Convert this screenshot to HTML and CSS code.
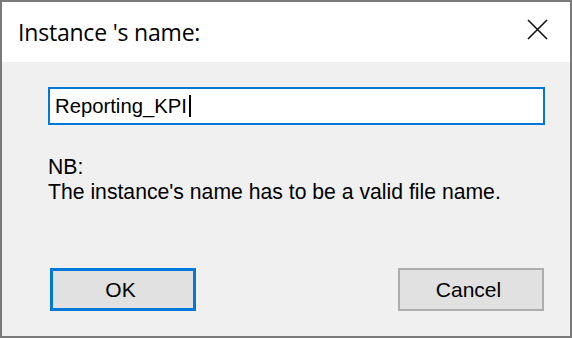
FILE: index.html
```html
<!DOCTYPE html>
<html>
<head>
<meta charset="utf-8">
<link rel="stylesheet" href="styles.css">
</head>
<body>
<div class="dialog">
  <div class="titlebar">
    <span class="title">Instance 's name:</span>
    <svg class="close" width="21" height="21" viewBox="0 0 21 21"><path d="M1 1 L20 20 M20 1 L1 20" stroke="#111" stroke-width="1.6" fill="none"/></svg>
  </div>
  <div class="content">
    <div class="input"><span class="value">Reporting_KPI</span><span class="caret"></span></div>
    <div class="note">
      <div>NB:</div>
      <div>The instance's name has to be a valid file name.</div>
    </div>
    <div class="buttons">
      <div class="btn ok">OK</div>
      <div class="btn cancel">Cancel</div>
    </div>
  </div>
</div>
</body>
</html>
```

FILE: styles.css
```css
html, body {
  margin: 0;
  padding: 0;
  background: #ffffff;
}
.dialog {
  width: 572px;
  height: 338px;
  box-sizing: border-box;
  border: 2px solid #7a7a7a;
  display: flex;
  flex-direction: column;
  background: #f0f0f0;
}
.titlebar {
  height: 60px;
  background: #ffffff;
  display: flex;
  align-items: center;
  justify-content: space-between;
  padding: 0 22px 0 16px;
  flex-shrink: 0;
}
.title {
  font-family: "Open Sans", "Noto Sans", sans-serif;
  font-size: 23px;
  color: #000;
  letter-spacing: -0.2px;
}
.close {
  display: block;
  margin-top: -6px;
}
.content {
  flex: 1;
  padding: 25px 0 0 46px;
  font-family: "Liberation Sans", Arial, sans-serif;
  font-size: 21.2px;
  color: #000;
}
.input {
  width: 497px;
  height: 38px;
  box-sizing: border-box;
  border: 2px solid #0078d7;
  background: #fff;
  display: flex;
  align-items: center;
  padding-left: 5px;
  font-size: 20.3px;
}
.caret {
  display: inline-block;
  width: 2px;
  height: 22px;
  background: #000;
  margin-left: 2px;
}
.note {
  margin-top: 29px;
  line-height: 25px;
}
.buttons {
  display: flex;
  justify-content: space-between;
  width: 494px;
  margin-top: 64px;
  margin-left: 2px;
}
.btn {
  width: 146px;
  height: 43px;
  box-sizing: border-box;
  background: #e1e1e1;
  display: flex;
  align-items: center;
  justify-content: center;
  font-size: 21px;
  padding-right: 5px;
}
.ok {
  border: 3px solid #0078d7;
}
.cancel {
  border: 2px solid #adadad;
}
```
